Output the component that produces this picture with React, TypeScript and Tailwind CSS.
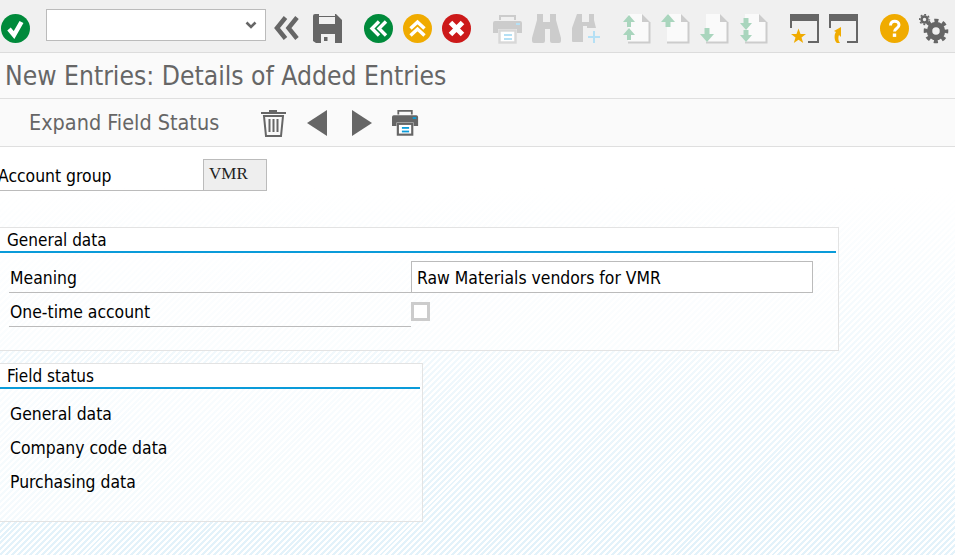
const iconClass = "mt-[14px] h-[30px] w-[30px] shrink-0";
const fieldFont = "font-['DejaVu_Sans_Condensed','DejaVu_Sans',sans-serif]";

function CircleIcon({ fill, className, children }: { fill: string; className: string; children: React.ReactNode }) {
  return (
    <svg viewBox="0 0 30 30" className={`${iconClass} ${className}`}>
      <circle cx="14.5" cy="14.5" r="14.5" fill={fill} />
      <g fill="none" stroke="#fff" strokeWidth="3.4">{children}</g>
    </svg>
  );
}

function Printer({ className, dark, accent, paper }: { className: string; dark: string; accent: string; paper: string }) {
  return (
    <svg viewBox="0 0 30 30" className={`shrink-0 ${className}`}>
      <path d="M6 1h17v2H8v3H6zM21 3h2v3h-2z" fill={dark} />
      <path d="M2 7h25a2 2 0 0 1 2 2v10h-5v-4H5v4H0V9a2 2 0 0 1 2-2z" fill={dark} />
      <rect x="23" y="9" width="4" height="2" fill={accent} />
      <rect x="6.5" y="16.5" width="16" height="12" fill="#fff" stroke={paper} strokeWidth="2.4" />
      <rect x="11" y="20" width="8" height="2" fill={accent} />
      <rect x="11" y="24" width="8" height="2" fill={accent} />
    </svg>
  );
}

function Binoculars({ className, plus }: { className: string; plus?: boolean }) {
  return (
    <svg viewBox="0 0 30 30" className={`${iconClass} ${className}`}>
      {plus ? (
        <>
          <path d="M5 0h5v8h7V0h5v6l2 8H15v-2h-4v16H1a1 1 0 0 1-1-1V14z" fill="#ccc" />
          <path d="M16 23h12M22 17v12" stroke="#b5e0f5" strokeWidth="2" />
        </>
      ) : (
        <path d="M5 0h6v8h7V0h6v6l5 18v3a2 2 0 0 1-2 2h-7a2 2 0 0 1-2-2V15h-5v12a2 2 0 0 1-2 2H2a2 2 0 0 1-2-2v-3L5 6z" fill="#ccc" />
      )}
    </svg>
  );
}

function PageIcon({ className, arrows }: { className: string; arrows: React.ReactNode }) {
  return (
    <svg viewBox="0 0 30 30" className={`${iconClass} ${className}`}>
      <path d="M8 0h12l8 8v21H6V0z" fill="#fafafa" />
      <path d="M20 0l8 8h-8z" fill="#ccc" />
      <path d="M26.500 8v19.500H6v2h22.500V8z" fill="#ccc" />
      <g fill="#a9d5bd">{arrows}</g>
    </svg>
  );
}

function WindowIcon({ className, children }: { className: string; children: React.ReactNode }) {
  return (
    <svg viewBox="0 0 30 30" className={`${iconClass} ${className}`}>
      <rect width="29" height="7" fill="#666" />
      <rect y="7" width="2" height="7" fill="#666" />
      <path d="M27 7h2v22H18v-2h9z" fill="#666" />
      {children}
    </svg>
  );
}

function Gear({ cx, cy, scale }: { cx: number; cy: number; scale: number }) {
  return (
    <g transform={`translate(${cx} ${cy}) scale(${scale})`} fill="none" stroke="#666">
      <circle r="6.5" strokeWidth="5.5" />
      <circle r="10.5" strokeWidth="3.6" strokeDasharray="4.1 4.15" strokeDashoffset="2" />
    </g>
  );
}

function Toolbar() {
  return (
    <div className="flex h-[53px] items-start border-b border-[#dcdcdc] bg-[#f0f0f0] pl-px">
      <CircleIcon fill="#008a3b" className="">
        <path d="M8 15l5 6 7.500-13" strokeWidth="4.500" />
      </CircleIcon>
      <div className="ml-[15px] mt-[9px] flex h-[32px] w-[220px] shrink-0 items-center justify-end border border-[#bbb] bg-white pr-[8px]">
        <svg viewBox="0 0 12 8" className="h-[8px] w-[12px]">
          <path d="M1.500 1.500L6 6l4.500-4.500" fill="none" stroke="#666" strokeWidth="2.600" />
        </svg>
      </div>
      <svg viewBox="0 0 30 30" className={`${iconClass} ml-[6px]`}>
        <path d="M13.500 3.500L5 14l8.500 10.500M25 3.500L16.500 14 25 24.500" fill="none" stroke="#666" strokeWidth="4.500" />
      </svg>
      <svg viewBox="0 0 30 30" className={`${iconClass} ml-[11px]`}>
        <path d="M2 0h21l6 6v23H3l-3-2V2a2 2 0 0 1 2-2z" fill="#666" />
        <rect x="6" y="0" width="16" height="10" fill="#f0f0f0" />
        <rect x="6" y="2" width="16" height="1" fill="#666" />
        <rect x="8" y="20" width="14" height="9" fill="#f0f0f0" />
        <rect x="11" y="23" width="3.500" height="4" fill="#666" />
      </svg>
      <CircleIcon fill="#008a3b" className="ml-[21px]">
        <path d="M15 7.500L8 14.500l7 7M22 7.500L15 14.500l7 7" />
      </CircleIcon>
      <CircleIcon fill="#f0ab00" className="ml-[9px]">
        <path d="M7.500 14.500L14.500 8l7 6.500M7.500 21.500L14.500 15l7 6.500" />
      </CircleIcon>
      <CircleIcon fill="#cc1919" className="ml-[9px]">
        <path d="M8.500 8.500l12 12M20.500 8.500l-12 12" strokeWidth="5" />
      </CircleIcon>
      <Printer className="ml-[21px] mt-[14px] h-[30px] w-[30px]" dark="#ccc" accent="#b5e0f5" paper="#d8d8d8" />
      <Binoculars className="ml-[9px]" />
      <Binoculars className="ml-[10px]" plus />
      <PageIcon className="ml-[20px]" arrows={<path d="M7 1l6 7H9v5H5V8H1zM7 14l6 7H9v5H5v-5H1z" />} />
      <PageIcon className="ml-[9px]" arrows={<path d="M7 0l7 8H9.500v5h-5V8H0z" />} />
      <PageIcon className="ml-[9px]" arrows={<path d="M4.500 14h5v6H14l-7 8-7-8h4.500z" />} />
      <PageIcon className="ml-[9px]" arrows={<path d="M4.500 4h5v5H13l-6 7-6-7h3.500zM4.500 16h5v5H13l-6 7-6-7h3.500z" />} />
      <WindowIcon className="ml-[21px]">
        <path d="M8.500 14.500l2 5.500h5.500l-4.500 3.500 1.700 5.500-4.700-3.300L3.800 29l1.700-5.500L1 20h5.500z" fill="#f0ab00" />
      </WindowIcon>
      <WindowIcon className="ml-[9px]">
        <path d="M8 29c-3-2-3-9-1-11l-2-1 7-4v10l-2-2c-1 2-1 6 1 8z" fill="#f0ab00" />
      </WindowIcon>
      <CircleIcon fill="#f0ab00" className="ml-[21px]">
        <path d="M10.500 11.500c0-6 8.500-5.500 8.500-.5 0 3.500-4.500 3.500-4.500 6.500" strokeWidth="3" />
        <rect x="12.800" y="19.500" width="3.400" height="3.400" fill="#fff" stroke="none" />
      </CircleIcon>
      <svg viewBox="0 0 30 30" className={`${iconClass} ml-[9px]`}>
        <Gear cx={17} cy={17} scale={1} />
        <Gear cx={5.500} cy={5.500} scale={0.46} />
      </svg>
    </div>
  );
}

function ActionBar() {
  return (
    <div className={`flex h-[48px] items-center border-b border-[#dfdfdf] bg-[#fafafa] pl-[29px] ${fieldFont}`}>
      <span className="w-[231px] shrink-0 pt-[2px] text-[21.45px] text-[#666]">Expand Field Status</span>
      <svg viewBox="0 0 28 28" className="h-[28px] w-[28px] shrink-0">
        <path d="M9 3V1h8v2h9v2H1V3z" fill="#666" />
        <path d="M4 7h19l-2 20H6z" fill="none" stroke="#666" strokeWidth="2" />
        <path d="M9.500 10v13M13.500 10v13M17.500 10v13" stroke="#666" strokeWidth="2" />
      </svg>
      <svg viewBox="0 0 20 26" className="ml-[19px] h-[26px] w-[20px] shrink-0">
        <path d="M20 0v26L0 13z" fill="#666" />
      </svg>
      <svg viewBox="0 0 20 26" className="ml-[25px] h-[26px] w-[20px] shrink-0">
        <path d="M0 0v26l20-13z" fill="#666" />
      </svg>
      <Printer className="ml-[20px] h-[27px] w-[27px]" dark="#666" accent="#0a9bd9" paper="#666" />
    </div>
  );
}

function Panel({ title, className, children }: { title: string; className: string; children: React.ReactNode }) {
  return (
    <section className={`-ml-px border border-[#e3e3e3] bg-white/60 pr-[2px] ${className}`}>
      <h2 className="h-[25px] border-b-2 border-[#0a9bd9] bg-white pl-[7px] text-[17px] leading-[25px] text-black">{title}</h2>
      {children}
    </section>
  );
}

export default function App() {
  return (
    <div className="flex h-[555px] w-[955px] flex-col overflow-hidden bg-white">
      <Toolbar />
      <div className="flex h-[46px] items-center border-b border-[#dfdfdf] bg-[#fafafa] pl-[5px]">
        <h1 className={`pt-[2px] text-[26.25px] text-[#666] ${fieldFont}`}>New Entries: Details of Added Entries</h1>
      </div>
      <ActionBar />
      <main className={`flex-1 bg-[repeating-linear-gradient(135deg,#ffffff_0,#ffffff_2.1px,transparent_2.1px,transparent_4.2px),linear-gradient(180deg,#ffffff_10%,#e3f2fa_95%)] pt-[12px] text-[17.4px] text-black ${fieldFont}`}>
        <div className="-ml-[2px] flex h-[32px] items-stretch">
          <div className="flex w-[205px] items-center border-b border-[#bbb] pt-[4px]">Account group</div>
          <div className="w-[64px] border border-[#bbb] bg-[#eeeeee] pl-[5px] font-['Liberation_Serif',serif] text-[17px] leading-[28px] text-[#222]">VMR</div>
        </div>
        <Panel title="General data" className="mt-[36px] h-[124px] w-[840px]">
          <div className="ml-[9px] mt-[8px] flex h-[32px]">
            <div className="flex w-[402px] items-center border-b border-[#bbb] pl-[1px] pt-[4px]">Meaning</div>
            <div className="flex w-[402px] items-center border border-[#bbb] bg-white pl-[5px] pt-[2px]">Raw Materials vendors for VMR</div>
          </div>
          <div className="ml-[9px] mt-[2px] flex h-[32px]">
            <div className="flex w-[402px] items-center border-b border-[#bbb] pl-[1px] pt-[4px]">One-time account</div>
            <div className="mt-[7px] h-[19px] w-[19px] border-[3px] border-[#ccc] bg-white" />
          </div>
        </Panel>
        <Panel title="Field status" className="mt-[12px] h-[159px] w-[424px]">
          <div className="ml-[10px] mt-[6px] flex flex-col">
            <div className="flex h-[34px] items-center pt-[4px]">General data</div>
            <div className="flex h-[34px] items-center pt-[4px]">Company code data</div>
            <div className="flex h-[34px] items-center pt-[4px]">Purchasing data</div>
          </div>
        </Panel>
      </main>
    </div>
  );
}
